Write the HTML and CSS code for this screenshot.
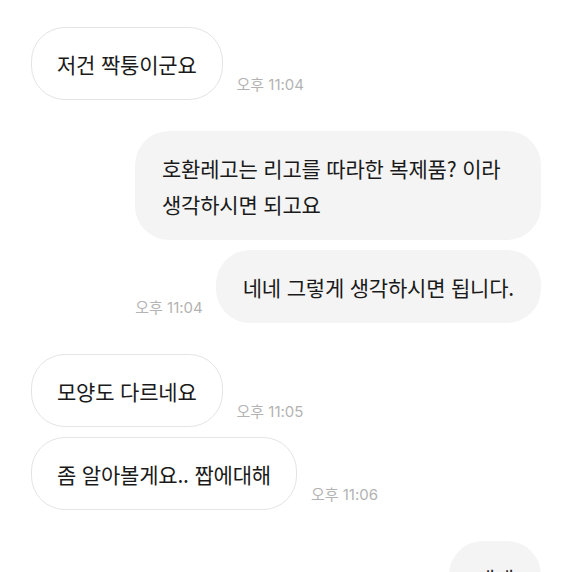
FILE: index.html
```html
<!DOCTYPE html>
<html lang="ko">
<head>
  <meta charset="UTF-8" />
  <meta name="viewport" content="width=device-width, initial-scale=1.0"/>
  <title>채팅</title>
  <link rel="stylesheet" href="styles.css">
</head>
<body>
  <div class="chat">
    <div class="row in">
      <p class="bubble">저건 짝퉁이군요</p>
      <span class="time">오후 11:04</span>
    </div>
    <div class="group out">
      <div class="row out">
        <p class="bubble wide">호환레고는 리고를 따라한 복제품? 이라 생각하시면 되고요</p>
      </div>
      <div class="row out">
        <span class="time">오후 11:04</span>
        <p class="bubble">네네 그렇게 생각하시면 됩니다.</p>
      </div>
    </div>
    <div class="group in">
      <div class="row in">
        <p class="bubble">모양도 다르네요</p>
        <span class="time">오후 11:05</span>
      </div>
      <div class="row in">
        <p class="bubble">좀 알아볼게요.. 짭에대해</p>
        <span class="time">오후 11:06</span>
      </div>
    </div>
    <div class="row out">
      <p class="bubble">네네</p>
    </div>
  </div>
</body>
</html>
```

FILE: styles.css
```css
* { box-sizing: border-box; margin: 0; padding: 0; }
html, body { height: 100%; overflow: hidden; }
body {
  background: #fff;
  font-family: 'Noto Sans CJK KR', 'Noto Sans', sans-serif;
  color: #1a1a1a;
}
.chat {
  display: flex;
  flex-direction: column;
  gap: 31px;
  padding: 27px 31px;
}
.group { display: flex; flex-direction: column; gap: 10px; }
.row { display: flex; align-items: flex-end; gap: 14px; }
.row.out { justify-content: flex-end; gap: 13px; }
.bubble {
  font-size: 21px;
  letter-spacing: -0.2px;
  line-height: 36px;
  padding: 18px 26px;
  border-radius: 34px;
}
.row.in .bubble { background: #fff; border: 1px solid #e4e4e4; padding: 17.5px 25px; }
.row.out .bubble { background: #f4f4f4; padding: 18.5px 27px; }
.bubble.wide { max-width: 406px; width: 406px; padding: 19px 27px; }
.time {
  font-family: Inter, 'Noto Sans CJK KR', sans-serif;
  font-size: 15px;
  line-height: 20px;
  color: #b3b3b3;
  margin-bottom: 5px;
  white-space: nowrap;
}
```
